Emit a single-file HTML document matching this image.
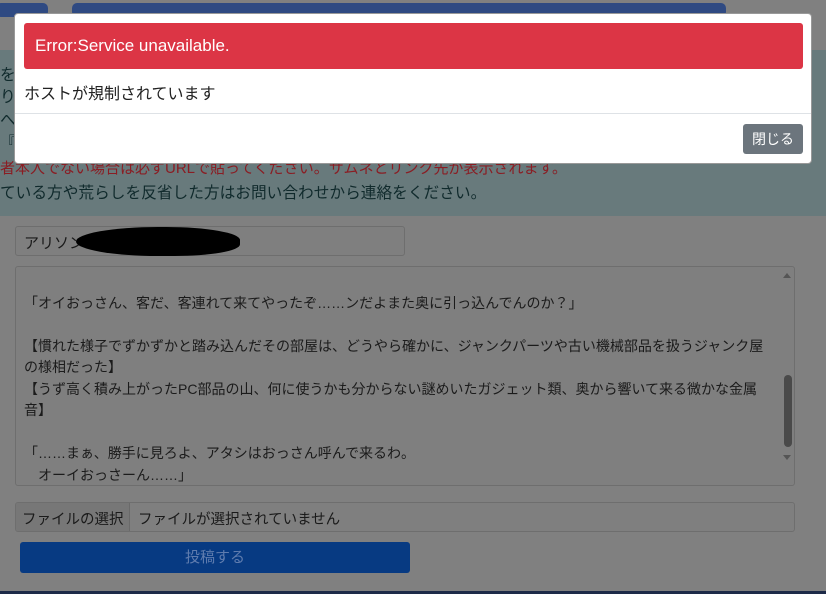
<!DOCTYPE html>
<html><head><meta charset="utf-8"><style>
*{margin:0;padding:0;box-sizing:border-box}
body{width:826px;height:594px;background:#808080;position:relative;overflow:hidden;font-family:"Liberation Sans","Noto Sans CJK JP",sans-serif;color:#1a1a1a}
.abs{position:absolute}
.badge{background:#2f4a82;border-radius:5px;height:14px;top:3px}
.band{left:0;top:50px;width:826px;height:166px;background:#687a7c}
.bl{position:absolute;left:0;font-size:15.7px;white-space:nowrap;color:#102a2c}
.inp{background:#7f7f7f;border:1px solid #6e6e6e;border-radius:3px}
.ta{font-size:14px;line-height:21.5px;white-space:pre;color:#1b1b1b}
</style></head><body>
<div class="abs badge" style="left:-4px;width:52px"></div>
<div class="abs badge" style="left:72px;width:654px"></div>
<div class="abs band"></div>
<div class="bl" style="top:62px">を</div>
<div class="bl" style="top:84px">り</div>
<div class="bl" style="top:107px">へ</div>
<div class="bl" style="top:130px">『</div>
<div class="bl" style="top:157px;color:#8a1d23;font-size:15px">者本人でない場合は必ずURLで貼ってください。サムネとリンク先が表示されます。</div>
<div class="bl" style="top:180px">ている方や荒らしを反省した方はお問い合わせから連絡をください。</div>
<div class="abs inp" style="left:15px;top:226px;width:390px;height:30px;font-size:15px;padding:5px 8px">アリソン</div>
<div class="abs" style="left:76px;top:227px;width:164px;height:29px;background:#000;border-radius:50% 45% 40% 50%"></div>
<div class="abs inp" style="left:15px;top:266px;width:780px;height:220px;overflow:hidden">
<div class="ta" style="padding:4px 8px">
「オイおっさん、客だ、客連れて来てやったぞ……ンだよまた奥に引っ込んでんのか？」

【慣れた様子でずかずかと踏み込んだその部屋は、どうやら確かに、ジャンクパーツや古い機械部品を扱うジャンク屋
の様相だった】
【うず高く積み上がったPC部品の山、何に使うかも分からない謎めいたガジェット類、奥から響いて来る微かな金属
音】

「……まぁ、勝手に見ろよ、アタシはおっさん呼んで来るわ。
　オーイおっさーん……」</div>
<div class="abs" style="right:2px;top:108px;width:8px;height:72px;background:#4a4a4a;border-radius:4px"></div>
<div class="abs" style="right:3px;top:6px;width:0;height:0;border:4px solid transparent;border-bottom:5px solid #555;border-top:0"></div>
<div class="abs" style="right:3px;top:188px;width:0;height:0;border:4px solid transparent;border-top:5px solid #555;border-bottom:0"></div>
</div>
<div class="abs inp" style="left:15px;top:502px;width:780px;height:30px;font-size:14.5px;overflow:hidden;white-space:nowrap">
<span style="display:inline-block;width:114px;height:28px;background:#777;border-right:1px solid #6a6a6a;padding:5px 6px;vertical-align:top">ファイルの選択</span><span style="display:inline-block;padding:5px 0 0 8px;vertical-align:top">ファイルが選択されていません</span></div>
<div class="abs" style="left:20px;top:542px;width:390px;height:31px;background:#073a82;border-radius:3px;color:#5f7cae;font-size:15px;text-align:center;line-height:31px">投稿する</div>
<div class="abs" style="left:0;top:591px;width:826px;height:3px;background:#1d2a48"></div>

<div class="abs" style="left:14px;top:13px;width:798px;height:151px;background:#fff;border-radius:4px;border:1px solid #999">
<div class="abs" style="left:9px;top:9px;width:779px;height:46px;background:#dc3545;border-radius:3px;color:#fff;font-size:17px;line-height:46px;padding-left:11px">Error:Service unavailable.</div>
<div class="abs" style="left:9px;top:66px;font-size:16px;color:#222">ホストが規制されています</div>
<div class="abs" style="left:0;top:99px;width:796px;height:1px;background:#dee2e6"></div>
<div class="abs" style="left:728px;top:110px;width:60px;height:30px;background:#6c757d;border-radius:3px;color:#fff;font-size:14px;text-align:center;line-height:30px">閉じる</div>
</div>
</body></html>
